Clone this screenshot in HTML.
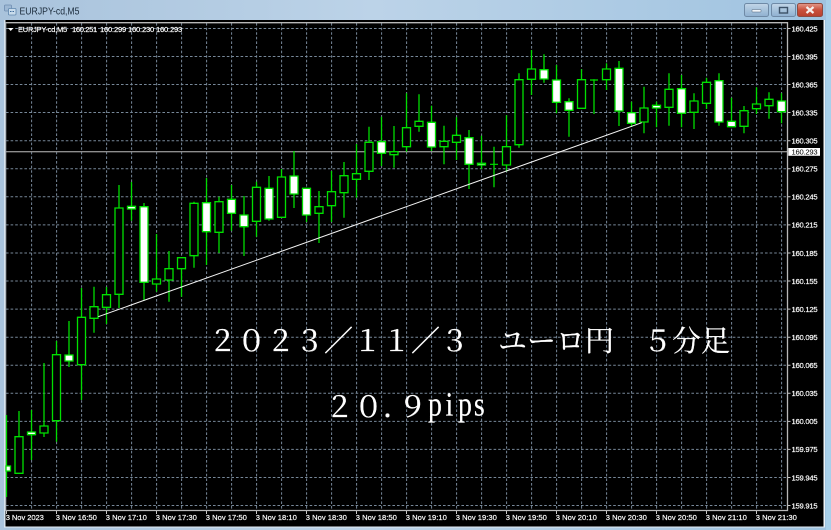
<!DOCTYPE html>
<html lang="ja"><head><meta charset="utf-8"><title>EURJPY-cd,M5</title>
<style>
html,body{margin:0;padding:0;width:831px;height:530px;overflow:hidden;background:#bcd3e8}
svg{display:block;position:absolute;left:0;top:0}
.a{font:7.6px "Liberation Sans",sans-serif;fill:#fff;stroke:#fff;stroke-width:.18px;letter-spacing:-.22px}
.j{font-family:"Liberation Serif","Noto Serif CJK JP","Noto Serif CJK SC",serif;font-size:29px;fill:#fff;stroke:#fff;stroke-width:.25px}
</style></head><body>
<svg width="831" height="530" viewBox="0 0 831 530" xmlns="http://www.w3.org/2000/svg">
<defs>
<linearGradient id="tb" x1="0" y1="0" x2="1" y2="0"><stop offset="0" stop-color="#a9c3dc"/><stop offset=".45" stop-color="#bcd3e8"/><stop offset="1" stop-color="#9fc3e0"/></linearGradient>
<linearGradient id="b1" x1="0" y1="0" x2="0" y2="1"><stop offset="0" stop-color="#c3d6e8"/><stop offset=".5" stop-color="#a8c3dc"/><stop offset="1" stop-color="#8fb0d0"/></linearGradient>
<linearGradient id="b2" x1="0" y1="0" x2="0" y2="1"><stop offset="0" stop-color="#e39a8c"/><stop offset=".5" stop-color="#c9503c"/><stop offset="1" stop-color="#b8402e"/></linearGradient>
</defs>
<rect width="831" height="530" fill="url(#tb)"/>
<rect x="0" y="0" width="831" height="20" fill="url(#tb)"/>
<rect x="5" y="20" width="819" height="506.500" fill="#000"/>
<rect x="4" y="20" width="1.500" height="507" fill="#d8e4ee"/>
<rect x="823.500" y="20" width="1.500" height="507" fill="#eef4f8"/>
<rect x="4" y="526.500" width="821" height="1" fill="#e4edf4"/>
<rect x="826" y="0" width="5" height="530" fill="#a8d0ea"/>

<!-- app icon -->
<rect x="4.500" y="5" width="7" height="6" rx="1" fill="#9db8d4" stroke="#6f8db0" stroke-width=".8"/>
<rect x="8.500" y="8.500" width="7.500" height="6.500" rx="1" fill="#c9dcec" stroke="#5f86ad" stroke-width=".8"/>
<path d="M10 11.500h1.500M12.500 11.500H14" stroke="#3f6d9c" stroke-width="1"/>
<text x="19.500" y="14.300" textLength="60" lengthAdjust="spacingAndGlyphs" style="font:9.800px 'Liberation Sans',sans-serif;fill:#1c2c3c">EURJPY-cd,M5</text>

<!-- window buttons -->
<rect x="744.500" y="3.500" width="24" height="13" rx="2" fill="url(#b1)" stroke="#6f8aa6"/>
<rect x="752" y="9.500" width="9" height="2.500" rx=".5" fill="#f2f6fa" stroke="#4b6178" stroke-width=".5"/>
<rect x="771.500" y="3.500" width="24" height="13" rx="2" fill="url(#b1)" stroke="#6f8aa6"/>
<rect x="779.500" y="7.500" width="8" height="5.500" fill="none" stroke="#3d5268" stroke-width="1.400"/>
<rect x="797.500" y="3.500" width="25" height="13" rx="2" fill="url(#b2)" stroke="#8e4a40"/>
<path d="M806.500 7l7 6M813.500 7l-7 6" stroke="#f6f0ee" stroke-width="2.200"/>

<!-- grid -->
<g stroke="#778899" stroke-width="1" fill="none" stroke-dasharray="2.600 2">
<path d="M6 28.500H787M6 56.500H787M6 84.500H787M6 112.500H787M6 140.700H787M6 168.700H787M6 196.800H787M6 224.900H787M6 253H787M6 281H787M6 309.100H787M6 337.200H787M6 365.200H787M6 393.300H787M6 421.400H787M6 449.400H787M6 477.500H787M6 505.500H787"/>
<path d="M31.600 23V510M56.600 23V510M81.600 23V510M106.600 23V510M131.600 23V510M156.600 23V510M181.600 23V510M206.600 23V510M231.600 23V510M256.600 23V510M281.600 23V510M306.600 23V510M331.600 23V510M356.600 23V510M381.600 23V510M406.600 23V510M431.600 23V510M456.600 23V510M481.600 23V510M506.600 23V510M531.600 23V510M556.600 23V510M581.600 23V510M606.600 23V510M631.600 23V510M656.600 23V510M681.600 23V510M706.600 23V510M731.600 23V510M756.600 23V510M781.600 23V510"/>
</g>

<!-- current price line -->
<path d="M6 151.700H787" stroke="#8d8d8d" stroke-width="1.400"/>

<!-- frame -->
<path d="M6 22.700H787.500V510.500H6" fill="none" stroke="#b8b8b8" stroke-width="1.300"/>
<path d="M5.800 22V511" stroke="#9fa6ad" stroke-width="1"/>

<!-- wicks -->
<path fill="none" stroke="#00dc00" stroke-width="1.300" d="M6.500 415V497M19 411V473M31.500 410V460M44 363V437M56.500 341V441.700M69 321V367M81.500 288V400M94 286.700V332.700M106.500 287V324M119 185V308M131.500 182V220.700M144 203V300.700M156.500 234V291.700M169 251V301.700M181.500 257V296.700M194 201.700V267.700M206.500 178V265M219 196.700V253M231.500 185V230.700M244 196V256M256.500 181.700V236.700M269 176V220.700M281.500 169V217M294 151V208M306.500 188V222M319 191V243M331.500 171V222M344 162V217.700M356.500 144V197.700M369 126.700V180M381.500 116.700V166M394 126V167.700M406.500 93.300V151.700M419 94.300V131.700M431.500 105.700V151M444 125.700V164.300M456.500 117.300V160M469 130V189M481.500 135.700V169.300M494 146.700V187.300M506.500 115.300V171.700M519 73.300V147.700M531.500 50V95M544 54.300V82.700M556.500 65V113.300M569 98.300V136.700M581.500 69.300V108M594 79.300V114M606.500 63.300V90M619 61V126M631.500 101.700V127M644 86.700V133.300M656.500 101.700V127.300M669 73.300V125.700M681.500 75V127.300M694 93.300V129M706.500 77.700V109M719 73.300V125.700M731.500 97.700V127M744 106V133.300M756.500 87.300V114M769 92.300V118.700M781.500 93.300V123.300"/>

<!-- hollow (up) candles -->
<path fill="#000" stroke="#00e000" stroke-width="1.300" d="M15 436.700H23V473.300H15ZM40 426H48V433H40ZM52.500 354.700H60.500V420.700H52.500ZM77.500 317.300H85.500V364.700H77.500ZM90 306.700H98V318.300H90ZM102.500 294.700H110.500V307.300H102.500ZM115 208H123V294.300H115ZM152.500 279H160.500V284H152.500ZM165 268.700H173V280H165ZM177.500 257.700H185.500V268.700H177.500ZM190 203.300H198V255.700H190ZM215 201.700H223V232.300H215ZM252.500 187.300H260.500V221.300H252.500ZM277.500 177H285.500V217.300H277.500ZM315 206.700H323V213.300H315ZM327.500 191.700H335.500V205.700H327.500ZM340 175.700H348V192.700H340ZM352.500 173.700H360.500V179.300H352.500ZM365 142.300H373V171.300H365ZM390 151.700H398V154.700H390ZM402.500 127.700H410.500V146.700H402.500ZM415 121.300H423V126.300H415ZM440 141.300H448V146.700H440ZM452.500 135.300H460.500V142.300H452.500ZM502.500 146.700H510.500V165H502.500ZM515 79.700H523V144.700H515ZM527.500 69H535.500V79.300H527.500ZM577.500 79.700H585.500V108.300H577.500ZM602.500 69H610.500V79.700H602.500ZM640 108H648V122H640ZM665 89.300H673V107.300H665ZM690 101H698V112.300H690ZM702.500 82.300H710.500V103.300H702.500ZM740 110.700H748V126.300H740ZM752.500 104H760.500V108.700H752.500ZM765 99.300H773V105.700H765Z"/>

<!-- thin doji lines -->
<path d="M490 164.300H498M590 80H598" stroke="#00e000" stroke-width="1.200"/>

<!-- white (down) candles -->
<path fill="#fff" stroke="#00e000" stroke-width="1.300" d="M6 466H10.500V471H6ZM27.500 432H35.500V434.700H27.500ZM65 355H73V361H65ZM127.500 206.300H135.500V209H127.500ZM140 206.700H148V282.300H140ZM202.500 202.700H210.500V231.700H202.500ZM227.500 199.300H235.500V213.300H227.500ZM240 215H248V226.700H240ZM265 188.300H273V219H265ZM290 176H298V194H290ZM302.500 188.300H310.500V215H302.500ZM377.500 141.700H385.500V153.300H377.500ZM427.500 122.300H435.500V147H427.500ZM465 137.700H473V164.300H465ZM477.500 163.300H485.500V165H477.500ZM540 69.700H548V79H540ZM552.500 80H560.500V102.300H552.500ZM565 101.700H573V110.300H565ZM615 68.300H623V111H615ZM627.500 112.700H635.500V123.300H627.500ZM652.500 105.300H660.500V108H652.500ZM677.500 88.700H685.500V113.300H677.500ZM715 80.700H723V122H715ZM727.500 121.300H735.500V126.700H727.500ZM777.500 101H785.500V111.700H777.500Z"/>

<!-- trend line -->
<path d="M98.300 316.700L641.700 122.700" stroke="#f4f4f4" stroke-width="1" fill="none"/>

<!-- header -->
<path d="M8 28H13.500L10.700 31Z" fill="#fff"/>
<g class="a">
<text class="a" x="18" y="32" textLength="49" lengthAdjust="spacingAndGlyphs">EURJPY-cd,M5</text>
<text class="a" x="72" y="32" textLength="25">160.251</text>
<text class="a" x="100" y="32" textLength="26">160.299</text>
<text class="a" x="128" y="32" textLength="26">160.230</text>
<text class="a" x="156" y="32" textLength="26">160.293</text>
</g>

<!-- price axis -->
<path stroke="#c8c8c8" stroke-width="1" d="M788 28.500h2.500M788 56.500h2.500M788 84.500h2.500M788 112.500h2.500M788 140.700h2.500M788 168.700h2.500M788 196.800h2.500M788 224.900h2.500M788 253h2.500M788 281h2.500M788 309.100h2.500M788 337.200h2.500M788 365.200h2.500M788 393.300h2.500M788 421.400h2.500M788 449.400h2.500M788 477.500h2.500M788 505.500h2.500"/>
<text class="a" x="791.500" y="31.300">160.425</text>
<text class="a" x="791.500" y="59.300">160.395</text>
<text class="a" x="791.500" y="87.300">160.365</text>
<text class="a" x="791.500" y="115.300">160.335</text>
<text class="a" x="791.500" y="143.500">160.305</text>
<text class="a" x="791.500" y="171.500">160.275</text>
<text class="a" x="791.500" y="199.600">160.245</text>
<text class="a" x="791.500" y="227.700">160.215</text>
<text class="a" x="791.500" y="255.800">160.185</text>
<text class="a" x="791.500" y="283.800">160.155</text>
<text class="a" x="791.500" y="311.900">160.125</text>
<text class="a" x="791.500" y="340">160.095</text>
<text class="a" x="791.500" y="368">160.065</text>
<text class="a" x="791.500" y="396.100">160.035</text>
<text class="a" x="791.500" y="424.200">160.005</text>
<text class="a" x="791.500" y="452.200">159.975</text>
<text class="a" x="791.500" y="480.300">159.945</text>
<text class="a" x="791.500" y="508.300">159.915</text>
<rect x="788.300" y="148" width="31.700" height="7.800" fill="#fff"/>
<text x="791.500" y="154.700" style="font:7.6px 'Liberation Sans',sans-serif;fill:#000;letter-spacing:-.22px">160.293</text>

<!-- time axis -->
<path stroke="#c8c8c8" stroke-width="1" d="M6.500 511v3M56.500 511v3M106.500 511v3M156.500 511v3M206.500 511v3M256.500 511v3M306.500 511v3M356.500 511v3M406.500 511v3M456.500 511v3M506.500 511v3M556.500 511v3M606.500 511v3M656.500 511v3M706.500 511v3M756.500 511v3"/>
<text class="a" x="5.700" y="519.800" textLength="38">3 Nov 2023</text>
<text class="a" x="55.700" y="519.800" textLength="41">3 Nov 16:50</text>
<text class="a" x="105.700" y="519.800" textLength="41">3 Nov 17:10</text>
<text class="a" x="155.700" y="519.800" textLength="41">3 Nov 17:30</text>
<text class="a" x="205.700" y="519.800" textLength="41">3 Nov 17:50</text>
<text class="a" x="255.700" y="519.800" textLength="41">3 Nov 18:10</text>
<text class="a" x="305.700" y="519.800" textLength="41">3 Nov 18:30</text>
<text class="a" x="355.700" y="519.800" textLength="41">3 Nov 18:50</text>
<text class="a" x="405.700" y="519.800" textLength="41">3 Nov 19:10</text>
<text class="a" x="455.700" y="519.800" textLength="41">3 Nov 19:30</text>
<text class="a" x="505.700" y="519.800" textLength="41">3 Nov 19:50</text>
<text class="a" x="555.700" y="519.800" textLength="41">3 Nov 20:10</text>
<text class="a" x="605.700" y="519.800" textLength="41">3 Nov 20:30</text>
<text class="a" x="655.700" y="519.800" textLength="41">3 Nov 20:50</text>
<text class="a" x="705.700" y="519.800" textLength="41">3 Nov 21:10</text>
<text class="a" x="755.700" y="519.800" textLength="41">3 Nov 21:30</text>

<!-- annotations -->
<text class="j" x="208" y="351" xml:space="preserve">２０２３／１１／３　ユーロ円　５分足</text>
<text class="j" x="325 354 383 398" y="417">２０．９</text>
<text transform="translate(428 415.700) scale(.82 1)" x="0 21.300 36.600 56" y="0" style="font:34px 'Liberation Serif',serif;fill:#fff;stroke:#fff;stroke-width:.2px">pips</text>
</svg>
</body></html>
